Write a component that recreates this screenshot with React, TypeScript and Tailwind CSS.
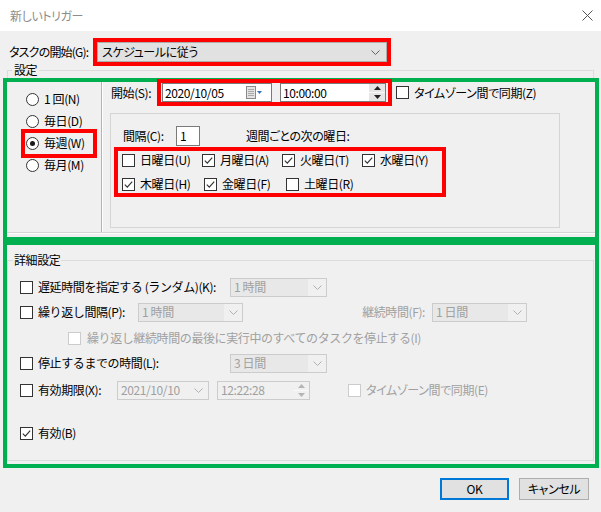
import React from "react";

// Windows "新しいトリガー" dialog with annotation boxes

const Chevron = ({ color = "#606060" }: { color?: string }) => (
  <svg width="9" height="5" viewBox="0 0 9 5">
    <path d="M0.5 0.5 L4.5 4.5 L8.5 0.5" fill="none" stroke={color} strokeWidth="1" />
  </svg>
);

const Check = ({ checked = false, disabled = false }: { checked?: boolean; disabled?: boolean }) => (
  <span
    className={`flex h-[13px] w-[13px] shrink-0 items-center justify-center border bg-white ${
      disabled ? "border-[#cccccc]" : "border-[#333333]"
    }`}
  >
    {checked && (
      <svg width="11" height="11" viewBox="0 0 11 11">
        <path d="M1.8 5.6 L4.3 8.1 L9.2 2.6" fill="none" stroke="#333333" strokeWidth="1.2" />
      </svg>
    )}
  </span>
);

const Radio = ({ checked = false }: { checked?: boolean }) => (
  <span className="flex h-[13px] w-[13px] shrink-0 items-center justify-center rounded-full border border-[#333333] bg-white">
    {checked && <span className="h-[5px] w-[5px] rounded-full bg-[#1a1a1a]" />}
  </span>
);

const Spinner = ({ disabled = false }: { disabled?: boolean }) => {
  const c = disabled ? "#b5b5b5" : "#222222";
  return (
    <div className={`flex h-full w-[16px] flex-col ${disabled ? "bg-[#f0f0f0]" : "bg-[#e6e6e6]"}`}>
      <div className="flex flex-1 items-center justify-center border-b border-[#f8f8f8]">
        <svg width="7" height="4" viewBox="0 0 7 4">
          <path d="M0 4 L3.5 0 L7 4 Z" fill={c} />
        </svg>
      </div>
      <div className="flex flex-1 items-center justify-center">
        <svg width="7" height="4" viewBox="0 0 7 4">
          <path d="M0 0 L3.5 4 L7 0 Z" fill={c} />
        </svg>
      </div>
    </div>
  );
};

const CalendarIcon = () => (
  <svg width="17" height="14" viewBox="0 0 17 14">
    <rect x="0.5" y="0.5" width="9" height="12" fill="#e4e4e4" stroke="#8a8a8a" />
    <path d="M2 3.5 H8 M2 5.5 H8 M2 7.5 H8 M2 9.5 H8" stroke="#a8a8a8" strokeWidth="1" />
    <path d="M11 5 L16 5 L13.5 8 Z" fill="#3b6fb6" />
  </svg>
);

const DisabledCombo = ({ value, className }: { value: string; className: string }) => (
  <div className={`flex h-[19px] items-center border border-[#cccccc] bg-[#f0f0f0] ${className}`}>
    <div className="flex h-full flex-1 items-center bg-[#e8e8e8] pl-[3px] text-[#a0a0a0]">{value}</div>
    <div className="flex h-full w-[18px] items-center justify-center">
      <Chevron color="#b0b0b0" />
    </div>
  </div>
);

const days: [string, boolean][][] = [
  [
    ["日曜日(U)", false],
    ["月曜日(A)", true],
    ["火曜日(T)", true],
    ["水曜日(Y)", true],
  ],
  [
    ["木曜日(H)", true],
    ["金曜日(F)", true],
    ["土曜日(R)", false],
  ],
];

export default function App() {
  return (
    <div className="flex h-[512px] w-[601px] flex-col overflow-hidden whitespace-nowrap bg-[#f0f0f0] font-['Noto_Sans_CJK_JP','Noto_Sans',sans-serif] text-[12px] leading-[16px] tracking-[-0.4px] text-black">
      {/* title bar */}
      <div className="flex h-[31px] shrink-0 items-center justify-between bg-white pl-[10px] pr-[8px]">
        <span className="text-[#8c8c8c] [font-feature-settings:'palt']">新しいトリガー</span>
        <svg width="11" height="11" viewBox="0 0 11 11">
          <path d="M0.5 0.5 L10.5 10.5 M10.5 0.5 L0.5 10.5" stroke="#555555" strokeWidth="1" />
        </svg>
      </div>

      {/* task start */}
      <div className="mt-[7px] flex h-[28px] shrink-0 items-center">
        <span className="w-[93px] shrink-0 pl-[9px] tracking-[-0.8px] [font-feature-settings:'palt']">タスクの開始(G):</span>
        <div className="h-[28px] w-[298px] border-[4px] border-[#ff0000]">
          <div className="flex h-full items-center justify-between border border-[#adadad] bg-[#e1e1e1] pl-[4px] pr-[6px]">
            <span className="[font-feature-settings:'palt']">スケジュールに従う</span>
            <Chevron />
          </div>
        </div>
      </div>

      {/* 設定 group header */}
      <div className="flex h-[12px] shrink-0 px-[7px]">
        <div className="mt-[4px] w-[5px] border-l border-t border-[#dcdcdc]" />
        <span className="-mt-[4px] px-[2px] leading-[16px]">設定</span>
        <div className="mt-[4px] flex-1 border-r border-t border-[#dcdcdc]" />
      </div>

      {/* settings (green) */}
      <div className="ml-[3px] mr-[2px] flex h-[163px] shrink-0 flex-col border-[4px] border-[#00b050]">
        <div className="flex h-[150px]">
          <div className="flex w-[94px] flex-col pt-[6px]">
            <div className="flex h-[22px] items-center gap-[5px] pl-[19px]">
              <Radio />
              <span>1 回(N)</span>
            </div>
            <div className="flex h-[22px] items-center gap-[5px] pl-[19px]">
              <Radio />
              <span>毎日(D)</span>
            </div>
            <div className="flex h-[22px] items-center pl-[14px]">
              <div className="flex h-[29px] w-[76px] shrink-0 items-center gap-[5px] border-[4px] border-[#ff0000] pl-[1px]">
                <Radio checked />
                <span>毎週(W)</span>
              </div>
            </div>
            <div className="flex h-[22px] items-center gap-[5px] pl-[19px]">
              <Radio />
              <span>毎月(M)</span>
            </div>
          </div>
          <div className="w-[2px] border-l border-r border-l-[#b4b4b4] border-r-white" />
          <div className="flex flex-1 flex-col">
            <div className="-mt-[3px] flex h-[27px] items-center pl-[8px]">
              <span className="w-[46px] shrink-0">開始(S):</span>
              <div className="flex h-[27px] w-[235px] shrink-0 items-center gap-[8px] border-[4px] border-[#ff0000] pl-[1px]">
                <div className="flex h-[19px] w-[110px] items-center justify-between border border-[#7a7a7a] bg-white pl-[2px] pr-[8px]">
                  <span>2020/10/05</span>
                  <CalendarIcon />
                </div>
                <div className="flex h-[19px] w-[106px] items-center justify-between border border-[#7a7a7a] bg-white pl-[2px]">
                  <span>10:00:00</span>
                  <Spinner />
                </div>
              </div>
              <div className="ml-[4px] flex items-center gap-[5px]">
                <Check />
                <span className="[font-feature-settings:'palt']">タイムゾーン間で同期(Z)</span>
              </div>
            </div>

            <div className="ml-[7px] mt-[7px] flex h-[115px] w-[450px] flex-col border border-[#d5d5d5]">
              <div className="mt-[12px] flex h-[20px] items-center pl-[12px]">
                <span className="w-[53px] shrink-0">間隔(C):</span>
                <div className="flex h-[20px] w-[24px] items-center border border-[#7a7a7a] bg-white pl-[3px]">1</div>
                <span className="ml-[46px] [font-feature-settings:'palt']">週間ごとの次の曜日:</span>
              </div>
              <div className="ml-[3px] mt-[1px] flex h-[50px] w-[332px] flex-col gap-[6px] border-[4px] border-[#ff0000]">
                {days.map((row, i) => (
                  <div key={i} className="flex h-[18px] pl-[4px]">
                    {row.map(([label, checked]) => (
                      <div key={label} className="flex w-[82px] items-center gap-[5px]">
                        <Check checked={checked} />
                        <span>{label}</span>
                      </div>
                    ))}
                  </div>
                ))}
              </div>
            </div>
          </div>
        </div>
        <div className="h-[2px] border-b border-t border-b-white border-t-[#d5d5d5]" />
      </div>

      {/* advanced (green) */}
      <div className="ml-[3px] mr-[2px] h-[227px] shrink-0 border-[4px] border-[#00b050]">
        <div className="mr-[1px] mt-[11px] flex h-[205px] flex-col">
          <div className="flex h-[12px]">
            <div className="mt-[4px] w-[6px] border-l border-t border-[#dcdcdc]" />
            <span className="-mt-[4px] px-[1px] leading-[16px]">詳細設定</span>
            <div className="mt-[4px] flex-1 border-r border-t border-[#dcdcdc]" />
          </div>
          <div className="flex flex-1 flex-col border-x border-b border-[#dcdcdc] pl-[12px] pt-[9px]">
            <div className="flex h-[20px] items-center">
              <Check />
              <span className="ml-[5px] w-[192px]">遅延時間を指定する (ランダム)(K):</span>
              <DisabledCombo value="1 時間" className="w-[97px]" />
            </div>
            <div className="mt-[5px] flex h-[20px] items-center">
              <Check />
              <span className="ml-[5px] w-[100px]">繰り返し間隔(P):</span>
              <DisabledCombo value="1 時間" className="w-[105px]" />
              <span className="w-[182px] text-right text-[#a0a0a0]">継続時間(F):</span>
              <DisabledCombo value="1 日間" className="ml-[7px] w-[95px]" />
            </div>
            <div className="mt-[6px] flex h-[20px] items-center pl-[48px]">
              <Check disabled />
              <span className="ml-[6px] text-[#a0a0a0]">繰り返し継続時間の最後に実行中のすべてのタスクを停止する(I)</span>
            </div>
            <div className="mt-[5px] flex h-[20px] items-center">
              <Check />
              <span className="ml-[5px] w-[192px]">停止するまでの時間(L):</span>
              <DisabledCombo value="3 日間" className="w-[97px]" />
            </div>
            <div className="mt-[7px] flex h-[20px] items-center">
              <Check />
              <span className="ml-[5px] w-[79px]">有効期限(X):</span>
              <div className="flex h-[19px] w-[92px] items-center justify-between border border-[#cccccc] bg-[#f0f0f0] pl-[3px] pr-[5px] text-[#a0a0a0]">
                <span>2021/10/10</span>
                <Chevron color="#b0b0b0" />
              </div>
              <div className="ml-[8px] flex h-[19px] w-[93px] items-center justify-between border border-[#cccccc] bg-[#f0f0f0] pl-[3px] text-[#a0a0a0]">
                <span>12:22:28</span>
                <Spinner disabled />
              </div>
              <div className="ml-[38px] flex items-center gap-[5px]">
                <Check disabled />
                <span className="text-[#a0a0a0] [font-feature-settings:'palt']">タイムゾーン間で同期(E)</span>
              </div>
            </div>
            <div className="mt-[23px] flex h-[20px] items-center gap-[5px]">
              <Check checked />
              <span>有効(B)</span>
            </div>
          </div>
        </div>
      </div>

      {/* buttons */}
      <div className="mt-[10px] flex shrink-0 justify-end gap-[10px] pr-[12px]">
        <button className="flex h-[22px] w-[69px] items-center justify-center border-2 border-[#0078d7] bg-[#e1e1e1]">OK</button>
        <button className="flex h-[22px] w-[70px] items-center justify-center border border-[#adadad] bg-[#e1e1e1] [font-feature-settings:'palt']">キャンセル</button>
      </div>
    </div>
  );
}
